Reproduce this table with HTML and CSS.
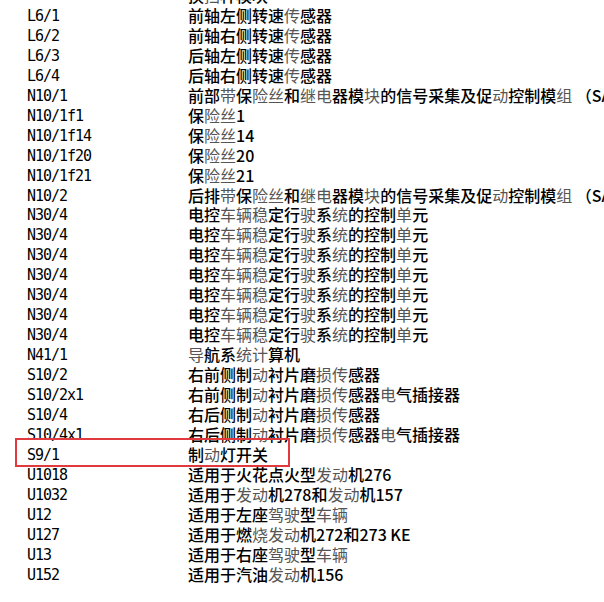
FILE: index.html
```html
<!DOCTYPE html>
<html lang="zh-CN">
<head>
  <meta charset="UTF-8">
  <title>电气部件列表</title>
  <link rel="stylesheet" href="styles.css">
</head>
<body>
  <div class="list">
    <div class="row"><span class="code"></span><span class="desc">换<i>挡</i>杆模块</span></div>
    <div class="row"><span class="code">L6/1</span><span class="desc">前轴左侧转速<i>传</i>感器</span></div>
    <div class="row"><span class="code">L6/2</span><span class="desc">前轴右侧转速<i>传</i>感器</span></div>
    <div class="row"><span class="code">L6/3</span><span class="desc">后轴左侧转速<i>传</i>感器</span></div>
    <div class="row"><span class="code">L6/4</span><span class="desc">后轴右侧转速<i>传</i>感器</span></div>
    <div class="row"><span class="code">N10/1</span><span class="desc">前部<i>带</i>保<i>险丝</i>和<i>继电</i>器模<i>块</i>的信号采集及促<i>动</i>控制模<i>组</i> （SAM）</span></div>
    <div class="row"><span class="code">N10/1f1</span><span class="desc">保<i>险丝</i>1</span></div>
    <div class="row"><span class="code">N10/1f14</span><span class="desc">保<i>险丝</i>14</span></div>
    <div class="row"><span class="code">N10/1f20</span><span class="desc">保<i>险丝</i>20</span></div>
    <div class="row"><span class="code">N10/1f21</span><span class="desc">保<i>险丝</i>21</span></div>
    <div class="row"><span class="code">N10/2</span><span class="desc">后排<i>带</i>保<i>险丝</i>和<i>继电</i>器模<i>块</i>的信号采集及促<i>动</i>控制模<i>组</i> （SAM）</span></div>
    <div class="row"><span class="code">N30/4</span><span class="desc">电控<i>车辆稳</i>定行<i>驶</i>系<i>统</i>的控制<i>单</i>元</span></div>
    <div class="row"><span class="code">N30/4</span><span class="desc">电控<i>车辆稳</i>定行<i>驶</i>系<i>统</i>的控制<i>单</i>元</span></div>
    <div class="row"><span class="code">N30/4</span><span class="desc">电控<i>车辆稳</i>定行<i>驶</i>系<i>统</i>的控制<i>单</i>元</span></div>
    <div class="row"><span class="code">N30/4</span><span class="desc">电控<i>车辆稳</i>定行<i>驶</i>系<i>统</i>的控制<i>单</i>元</span></div>
    <div class="row"><span class="code">N30/4</span><span class="desc">电控<i>车辆稳</i>定行<i>驶</i>系<i>统</i>的控制<i>单</i>元</span></div>
    <div class="row"><span class="code">N30/4</span><span class="desc">电控<i>车辆稳</i>定行<i>驶</i>系<i>统</i>的控制<i>单</i>元</span></div>
    <div class="row"><span class="code">N30/4</span><span class="desc">电控<i>车辆稳</i>定行<i>驶</i>系<i>统</i>的控制<i>单</i>元</span></div>
    <div class="row"><span class="code">N41/1</span><span class="desc"><i>导</i>航系<i>统计</i>算机</span></div>
    <div class="row"><span class="code">S10/2</span><span class="desc">右前侧制<i>动</i>衬片磨<i>损传</i>感器</span></div>
    <div class="row"><span class="code">S10/2x1</span><span class="desc">右前侧制<i>动</i>衬片磨<i>损传</i>感器<i>电</i>气插接器</span></div>
    <div class="row"><span class="code">S10/4</span><span class="desc">右后侧制<i>动</i>衬片磨<i>损传</i>感器</span></div>
    <div class="row"><span class="code">S10/4x1</span><span class="desc">右后侧制<i>动</i>衬片磨<i>损传</i>感器<i>电</i>气插接器</span></div>
    <div class="row marked"><span class="code">S9/1</span><span class="desc">制<i>动</i>灯开关</span></div>
    <div class="row"><span class="code">U1018</span><span class="desc">适用于火花点火型<i>发动</i>机276</span></div>
    <div class="row"><span class="code">U1032</span><span class="desc">适用于<i>发动</i>机278和<i>发动</i>机157</span></div>
    <div class="row"><span class="code">U12</span><span class="desc">适用于左座<i>驾驶</i>型<i>车辆</i></span></div>
    <div class="row"><span class="code">U127</span><span class="desc">适用于燃<i>烧发动</i>机272和273 KE</span></div>
    <div class="row"><span class="code">U13</span><span class="desc">适用于右座<i>驾驶</i>型<i>车辆</i></span></div>
    <div class="row"><span class="code">U152</span><span class="desc">适用于汽油<i>发动</i>机156</span></div>
  </div>
</body>
</html>
```

FILE: styles.css
```css
body {
  margin: 0;
  padding: 0 0 0 27px;
  background: #fff;
  color: #111;
  overflow: hidden;
}
.list {
  margin-top: -14px;
}
.row {
  position: relative;
  display: grid;
  grid-template-columns: 161px 1fr;
  height: 19.96px;
  line-height: 19.96px;
  white-space: nowrap;
}
.code {
  font-family: "DejaVu Sans Mono", monospace;
  font-size: 15px;
  letter-spacing: -1.03px;
  color: #000;
  padding-top: 1px;
}
.desc {
  font-family: "Noto Sans CJK SC", sans-serif;
  font-size: 16px;
  font-weight: 500;
  color: #000;
}
.desc i {
  font-style: normal;
  font-weight: 400;
  color: #555;
}
/* 标注框 */
.marked::after {
  content: "";
  position: absolute;
  left: -12px;
  top: -7px;
  width: 271px;
  height: 25px;
  border: 2px solid #e0393e;
}
```
